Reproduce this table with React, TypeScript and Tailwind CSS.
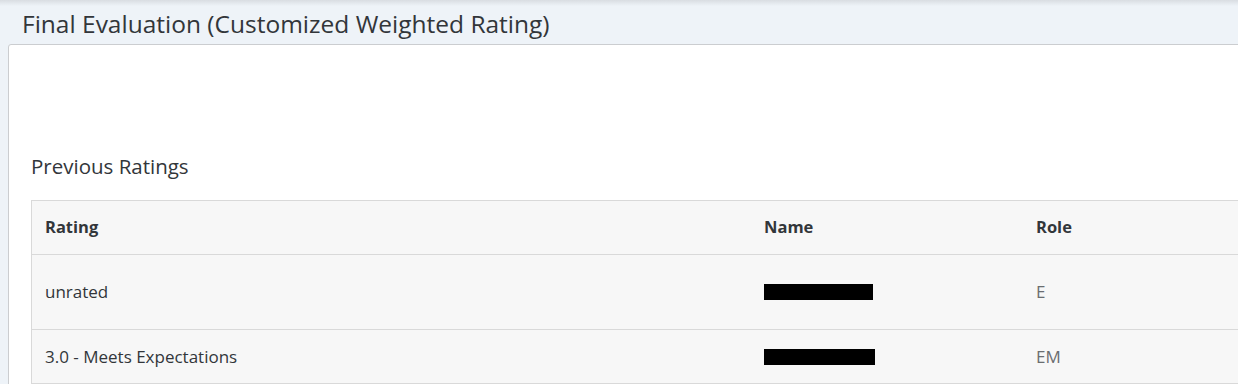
import React from "react";

const rows = [
  { rating: "unrated", nameW: 109, role: "E", h: "h-[75px]" },
  { rating: "3.0 - Meets Expectations", nameW: 111, role: "EM", h: "h-[54px]" },
];

export default function App() {
  return (
    <div
      className="relative w-[1238px] h-[384px] overflow-hidden bg-[#eef3f8] text-[#32363a]"
      style={{ fontFamily: '"Open Sans", "Noto Sans", Arial, sans-serif' }}
    >
      <div className="absolute left-0 top-0 w-full h-[6px] bg-gradient-to-b from-[#d9dde2] to-[#eef3f8]" />
      <div className="relative h-[44px] pl-[22px] pt-[6px]">
        <h1 className="text-[24.5px] leading-[36px] font-normal text-[#32363a]">
          Final Evaluation (Customized Weighted Rating)
        </h1>
      </div>
      <div className="ml-[8px] w-[1280px] h-[400px] bg-white border border-[#cbcdd0] rounded-tl-[3px] pl-[22px]">
        <div className="h-[106px]" />
        <div className="text-[20.5px] leading-[30px] text-[#32363a]">Previous Ratings</div>
        <div className="h-[19px]" />
        <div className="border border-[#d9d9d9] bg-[#f7f7f7] w-[1240px]">
          <div className="grid grid-cols-[718px_272px_1fr] h-[54px] items-center border-b border-[#d9d9d9] text-[16.5px] font-bold">
            <div className="pl-[13px]">Rating</div>
            <div className="pl-[14px]">Name</div>
            <div className="pl-[14px]">Role</div>
          </div>
          {rows.map((r, i) => (
            <div
              key={i}
              className={`grid grid-cols-[718px_272px_1fr] ${r.h} items-center border-b border-[#d9d9d9] text-[17px]`}
            >
              <div className="pl-[13px]">{r.rating}</div>
              <div className="pl-[14px]">
                <div className="h-[16px] bg-black" style={{ width: r.nameW }} />
              </div>
              <div className="pl-[14px] text-[#6a6d70]">{r.role}</div>
            </div>
          ))}
        </div>
      </div>
    </div>
  );
}
